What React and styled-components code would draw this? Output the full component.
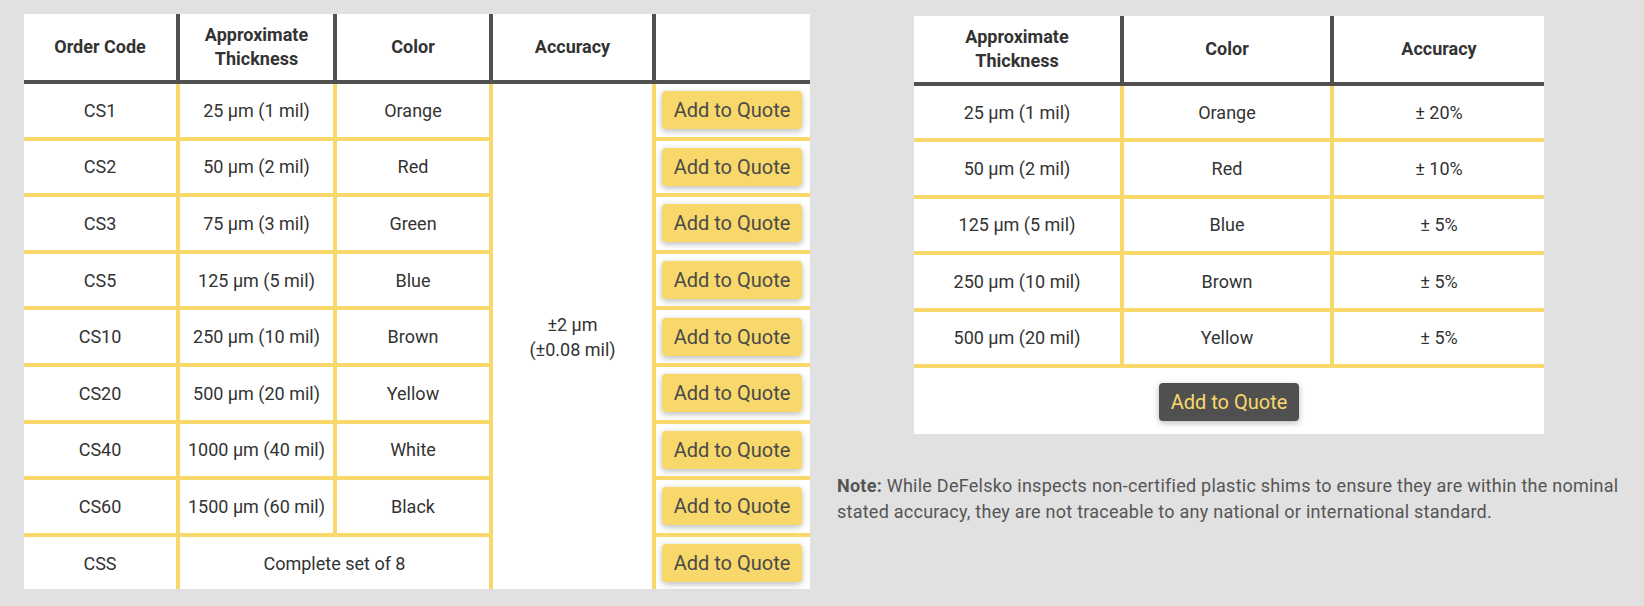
import React from "react";
import styled, { createGlobalStyle } from "styled-components";

const YELLOW = "#f8d86a";
const DARK = "#505050";

const GlobalStyle = createGlobalStyle`
  body {
    margin: 0;
    background: #e1e1e1;
    font-family: Roboto, "Liberation Sans", Arial, sans-serif;
    color: #333;
  }
`;

const Page = styled.div`
  display: grid;
  grid-template-columns: 786px 784px;
  column-gap: 27px;
  padding: 14px 24px;
  align-items: start;
`;

const Side = styled.div`
  display: flex;
  flex-direction: column;
  align-items: center;
  padding-top: 2px;
`;

const Table = styled.table`
  border-collapse: collapse;
  table-layout: fixed;
  width: ${(p) => p.$width}px;
  background: #fff;
`;

const Head = styled.th`
  height: 66px;
  padding: 0 6px;
  font-size: 18px;
  font-weight: 700;
  line-height: 24px;
  color: #333;
  text-align: center;
  vertical-align: middle;
  border-bottom: 4px solid ${DARK};
  border-right: 4px solid ${DARK};

  &:last-child {
    border-right: none;
  }
`;

const Cell = styled.td`
  height: ${(p) => p.$h || 52.6}px;
  padding: 0 3px;
  font-size: 18px;
  line-height: 25px;
  color: #333;
  text-align: center;
  vertical-align: middle;
  border-right: ${(p) => (p.$edge ? "none" : `4px solid ${YELLOW}`)};
  border-bottom: ${(p) => (p.$bottom ? "none" : `4px solid ${YELLOW}`)};
`;

const ButtonCell = styled(Cell)`
  padding: 0 8px 0 6px;
  border-right: none;
`;

const FooterCell = styled.td`
  padding: 15px 0 13px;
  text-align: center;
`;

const QuoteButton = styled.button`
  display: block;
  width: 140px;
  height: 38px;
  margin: 0 auto;
  padding: 0;
  border: none;
  border-radius: 4px;
  background: ${(p) => (p.$dark ? DARK : YELLOW)};
  color: ${(p) => (p.$dark ? YELLOW : "#4a4a4a")};
  font-family: Roboto, "Liberation Sans", Arial, sans-serif;
  font-size: 20px;
  box-shadow: 0 2px 6px rgba(0, 0, 0, 0.28);
  cursor: pointer;
`;

const Note = styled.p`
  align-self: stretch;
  margin: 39px 0 0;
  font-size: 18px;
  letter-spacing: 0.25px;
  line-height: 26px;
  color: #555;

  strong {
    font-weight: 700;
  }
`;

const shims = [
  ["CS1", "25 µm (1 mil)", "Orange"],
  ["CS2", "50 µm (2 mil)", "Red"],
  ["CS3", "75 µm (3 mil)", "Green"],
  ["CS5", "125 µm (5 mil)", "Blue"],
  ["CS10", "250 µm (10 mil)", "Brown"],
  ["CS20", "500 µm (20 mil)", "Yellow"],
  ["CS40", "1000 µm (40 mil)", "White"],
  ["CS60", "1500 µm (60 mil)", "Black"],
];

const certified = [
  ["25 µm (1 mil)", "Orange", "± 20%"],
  ["50 µm (2 mil)", "Red", "± 10%"],
  ["125 µm (5 mil)", "Blue", "± 5%"],
  ["250 µm (10 mil)", "Brown", "± 5%"],
  ["500 µm (20 mil)", "Yellow", "± 5%"],
];

const App = () => {
  return (
    <>
      <GlobalStyle />
      <Page>
        <Table $width={786}>
          <colgroup>
            <col style={{ width: 154 }} />
            <col style={{ width: 157 }} />
            <col style={{ width: 156 }} />
            <col style={{ width: 163 }} />
            <col style={{ width: 156 }} />
          </colgroup>
          <thead>
            <tr>
              <Head>Order Code</Head>
              <Head>
                Approximate
                <br />
                Thickness
              </Head>
              <Head>Color</Head>
              <Head>Accuracy</Head>
              <Head />
            </tr>
          </thead>
          <tbody>
            {shims.map(([code, thick, color], i) => (
              <tr key={code}>
                <Cell>{code}</Cell>
                <Cell>{thick}</Cell>
                <Cell>{color}</Cell>
                {i === 0 && (
                  <Cell rowSpan={9} $bottom>
                    ±2 µm
                    <br />
                    (±0.08 mil)
                  </Cell>
                )}
                <ButtonCell>
                  <QuoteButton>Add to Quote</QuoteButton>
                </ButtonCell>
              </tr>
            ))}
            <tr>
              <Cell $bottom>CSS</Cell>
              <Cell colSpan={2} $bottom>
                Complete set of 8
              </Cell>
              <ButtonCell $bottom>
                <QuoteButton>Add to Quote</QuoteButton>
              </ButtonCell>
            </tr>
          </tbody>
        </Table>

        <Side>
          <Table $width={630}>
            <colgroup>
              <col style={{ width: 208 }} />
              <col style={{ width: 210 }} />
              <col style={{ width: 212 }} />
            </colgroup>
            <thead>
              <tr>
                <Head>
                  Approximate
                  <br />
                  Thickness
                </Head>
                <Head>Color</Head>
                <Head>Accuracy</Head>
              </tr>
            </thead>
            <tbody>
              {certified.map(([thick, color, acc]) => (
                <tr key={thick}>
                  <Cell $h={52.4}>{thick}</Cell>
                  <Cell $h={52.4}>{color}</Cell>
                  <Cell $h={52.4} $edge>
                    {acc}
                  </Cell>
                </tr>
              ))}
              <tr>
                <FooterCell colSpan={3}>
                  <QuoteButton $dark>Add to Quote</QuoteButton>
                </FooterCell>
              </tr>
            </tbody>
          </Table>
          <Note>
            <strong>Note:</strong> While DeFelsko inspects non-certified plastic
            shims to ensure they are within the nominal stated accuracy, they are
            not traceable to any national or international standard.
          </Note>
        </Side>
      </Page>
    </>
  );
};

export default App;
